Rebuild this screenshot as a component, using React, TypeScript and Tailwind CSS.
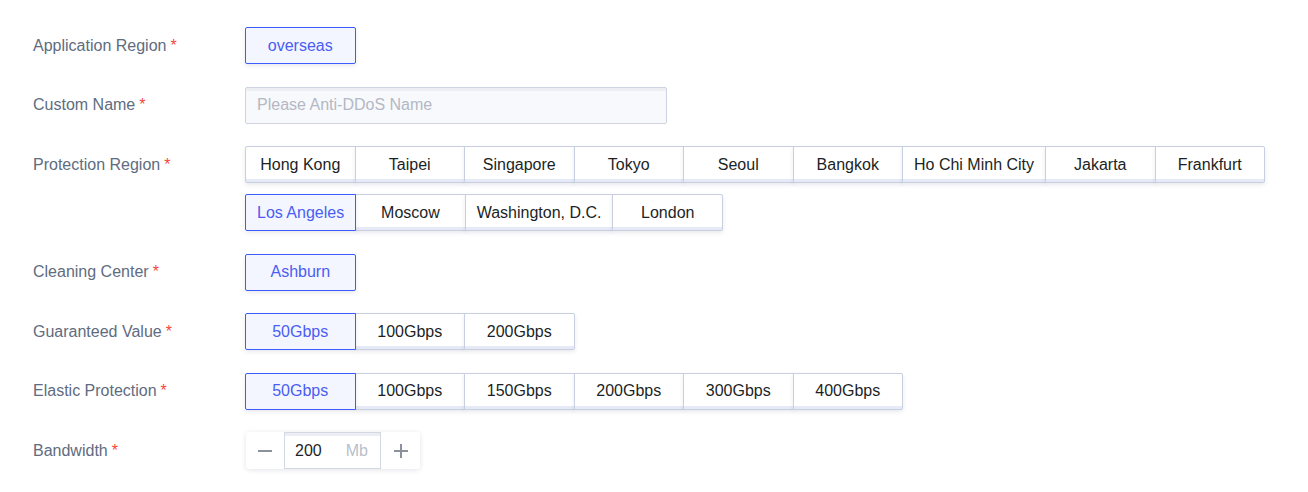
import React, { useState } from 'react';

const REGIONS_1 = ['Hong Kong', 'Taipei', 'Singapore', 'Tokyo', 'Seoul', 'Bangkok', 'Ho Chi Minh City', 'Jakarta', 'Frankfurt'];
const REGIONS_2 = ['Los Angeles', 'Moscow', 'Washington, D.C.', 'London'];
const GUARANTEED = ['50Gbps', '100Gbps', '200Gbps'];
const ELASTIC = ['50Gbps', '100Gbps', '150Gbps', '200Gbps', '300Gbps', '400Gbps'];

const Label: React.FC<{ text: string }> = ({ text }) => (
  <div className="w-[245px] shrink-0 pl-[33px] h-[37px] flex items-center text-[16px] text-[#606c80]">
    {text}
    <span className="ml-1 text-[#f5473b]">*</span>
  </div>
);

const OptionGroup: React.FC<{ items: string[]; selected: string | null; onSelect: (v: string) => void }> = ({
  items,
  selected,
  onSelect,
}) => (
  <div className="flex">
    {items.map((item, idx) => {
      const active = item === selected;
      return (
        <button
          key={item}
          onClick={() => onSelect(item)}
          className={`relative h-[37px] min-w-[110.5px] px-[11px] border text-[16px] whitespace-nowrap cursor-pointer ${
            idx > 0 ? '-ml-px' : ''
          } ${idx === 0 ? 'rounded-l-[2px]' : ''} ${idx === items.length - 1 ? 'rounded-r-[2px]' : ''} ${
            active
              ? 'z-10 border-[#3d5cff] bg-[#f3f6ff] text-[#4a5df3] shadow-[0_2px_4px_rgba(40,50,90,0.10)]'
              : 'border-[#c8cfe0] bg-white text-[#1c1f26] shadow-[inset_0_-3px_0_#e6eaf6,0_2px_4px_rgba(40,50,90,0.10)]'
          }`}
        >
          {item}
        </button>
      );
    })}
  </div>
);

export default function App() {
  const [region, setRegion] = useState('Los Angeles');
  const [guaranteed, setGuaranteed] = useState('50Gbps');
  const [elastic, setElastic] = useState('50Gbps');
  const [bandwidth, setBandwidth] = useState(200);

  return (
    <div className="min-h-screen bg-white pt-[27px] font-['Liberation_Sans',Arial,sans-serif]">
      <div className="flex flex-col gap-[22.5px]">
        <div className="flex">
          <Label text="Application Region" />
          <OptionGroup items={['overseas']} selected="overseas" onSelect={() => {}} />
        </div>

        <div className="flex">
          <Label text="Custom Name" />
          <input
            placeholder="Please Anti-DDoS Name"
            className="h-[37px] w-[422px] rounded-[2px] border border-[#cdd3e0] bg-[#f8f9fc] px-[11px] text-[16px] text-[#1c1f26] placeholder:text-[#b3b8c4] shadow-[inset_0_3px_0_#eceef3] outline-none"
          />
        </div>

        <div className="flex">
          <Label text="Protection Region" />
          <div className="flex flex-col gap-[11px]">
            <OptionGroup items={REGIONS_1} selected={region} onSelect={setRegion} />
            <OptionGroup items={REGIONS_2} selected={region} onSelect={setRegion} />
          </div>
        </div>

        <div className="flex">
          <Label text="Cleaning Center" />
          <OptionGroup items={['Ashburn']} selected="Ashburn" onSelect={() => {}} />
        </div>

        <div className="flex">
          <Label text="Guaranteed Value" />
          <OptionGroup items={GUARANTEED} selected={guaranteed} onSelect={setGuaranteed} />
        </div>

        <div className="flex">
          <Label text="Elastic Protection" />
          <OptionGroup items={ELASTIC} selected={elastic} onSelect={setElastic} />
        </div>

        <div className="flex">
          <Label text="Bandwidth" />
          <div className="ml-px flex h-[37px] rounded-[3px] bg-white shadow-[0_1px_5px_rgba(40,50,90,0.13)]">
            <button
              onClick={() => setBandwidth(b => Math.max(1, b - 1))}
              className="flex w-[38px] items-center justify-center cursor-pointer"
            >
              <span className="block h-[2px] w-[14px] bg-[#8b929e]" />
            </button>
            <div className="flex w-[97px] items-center justify-between border border-[#d3d8e3] bg-white pl-[10px] pr-[12px] shadow-[inset_0_3px_0_#eceef3]">
              <span className="text-[16px] text-[#1c1f26]">{bandwidth}</span>
              <span className="text-[16px] text-[#b8bfcc]">Mb</span>
            </div>
            <button
              onClick={() => setBandwidth(b => b + 1)}
              className="relative flex w-[39px] items-center justify-center cursor-pointer"
            >
              <span className="absolute h-[2px] w-[14px] bg-[#8b929e]" />
              <span className="absolute h-[14px] w-[2px] bg-[#8b929e]" />
            </button>
          </div>
        </div>
      </div>
    </div>
  );
}
